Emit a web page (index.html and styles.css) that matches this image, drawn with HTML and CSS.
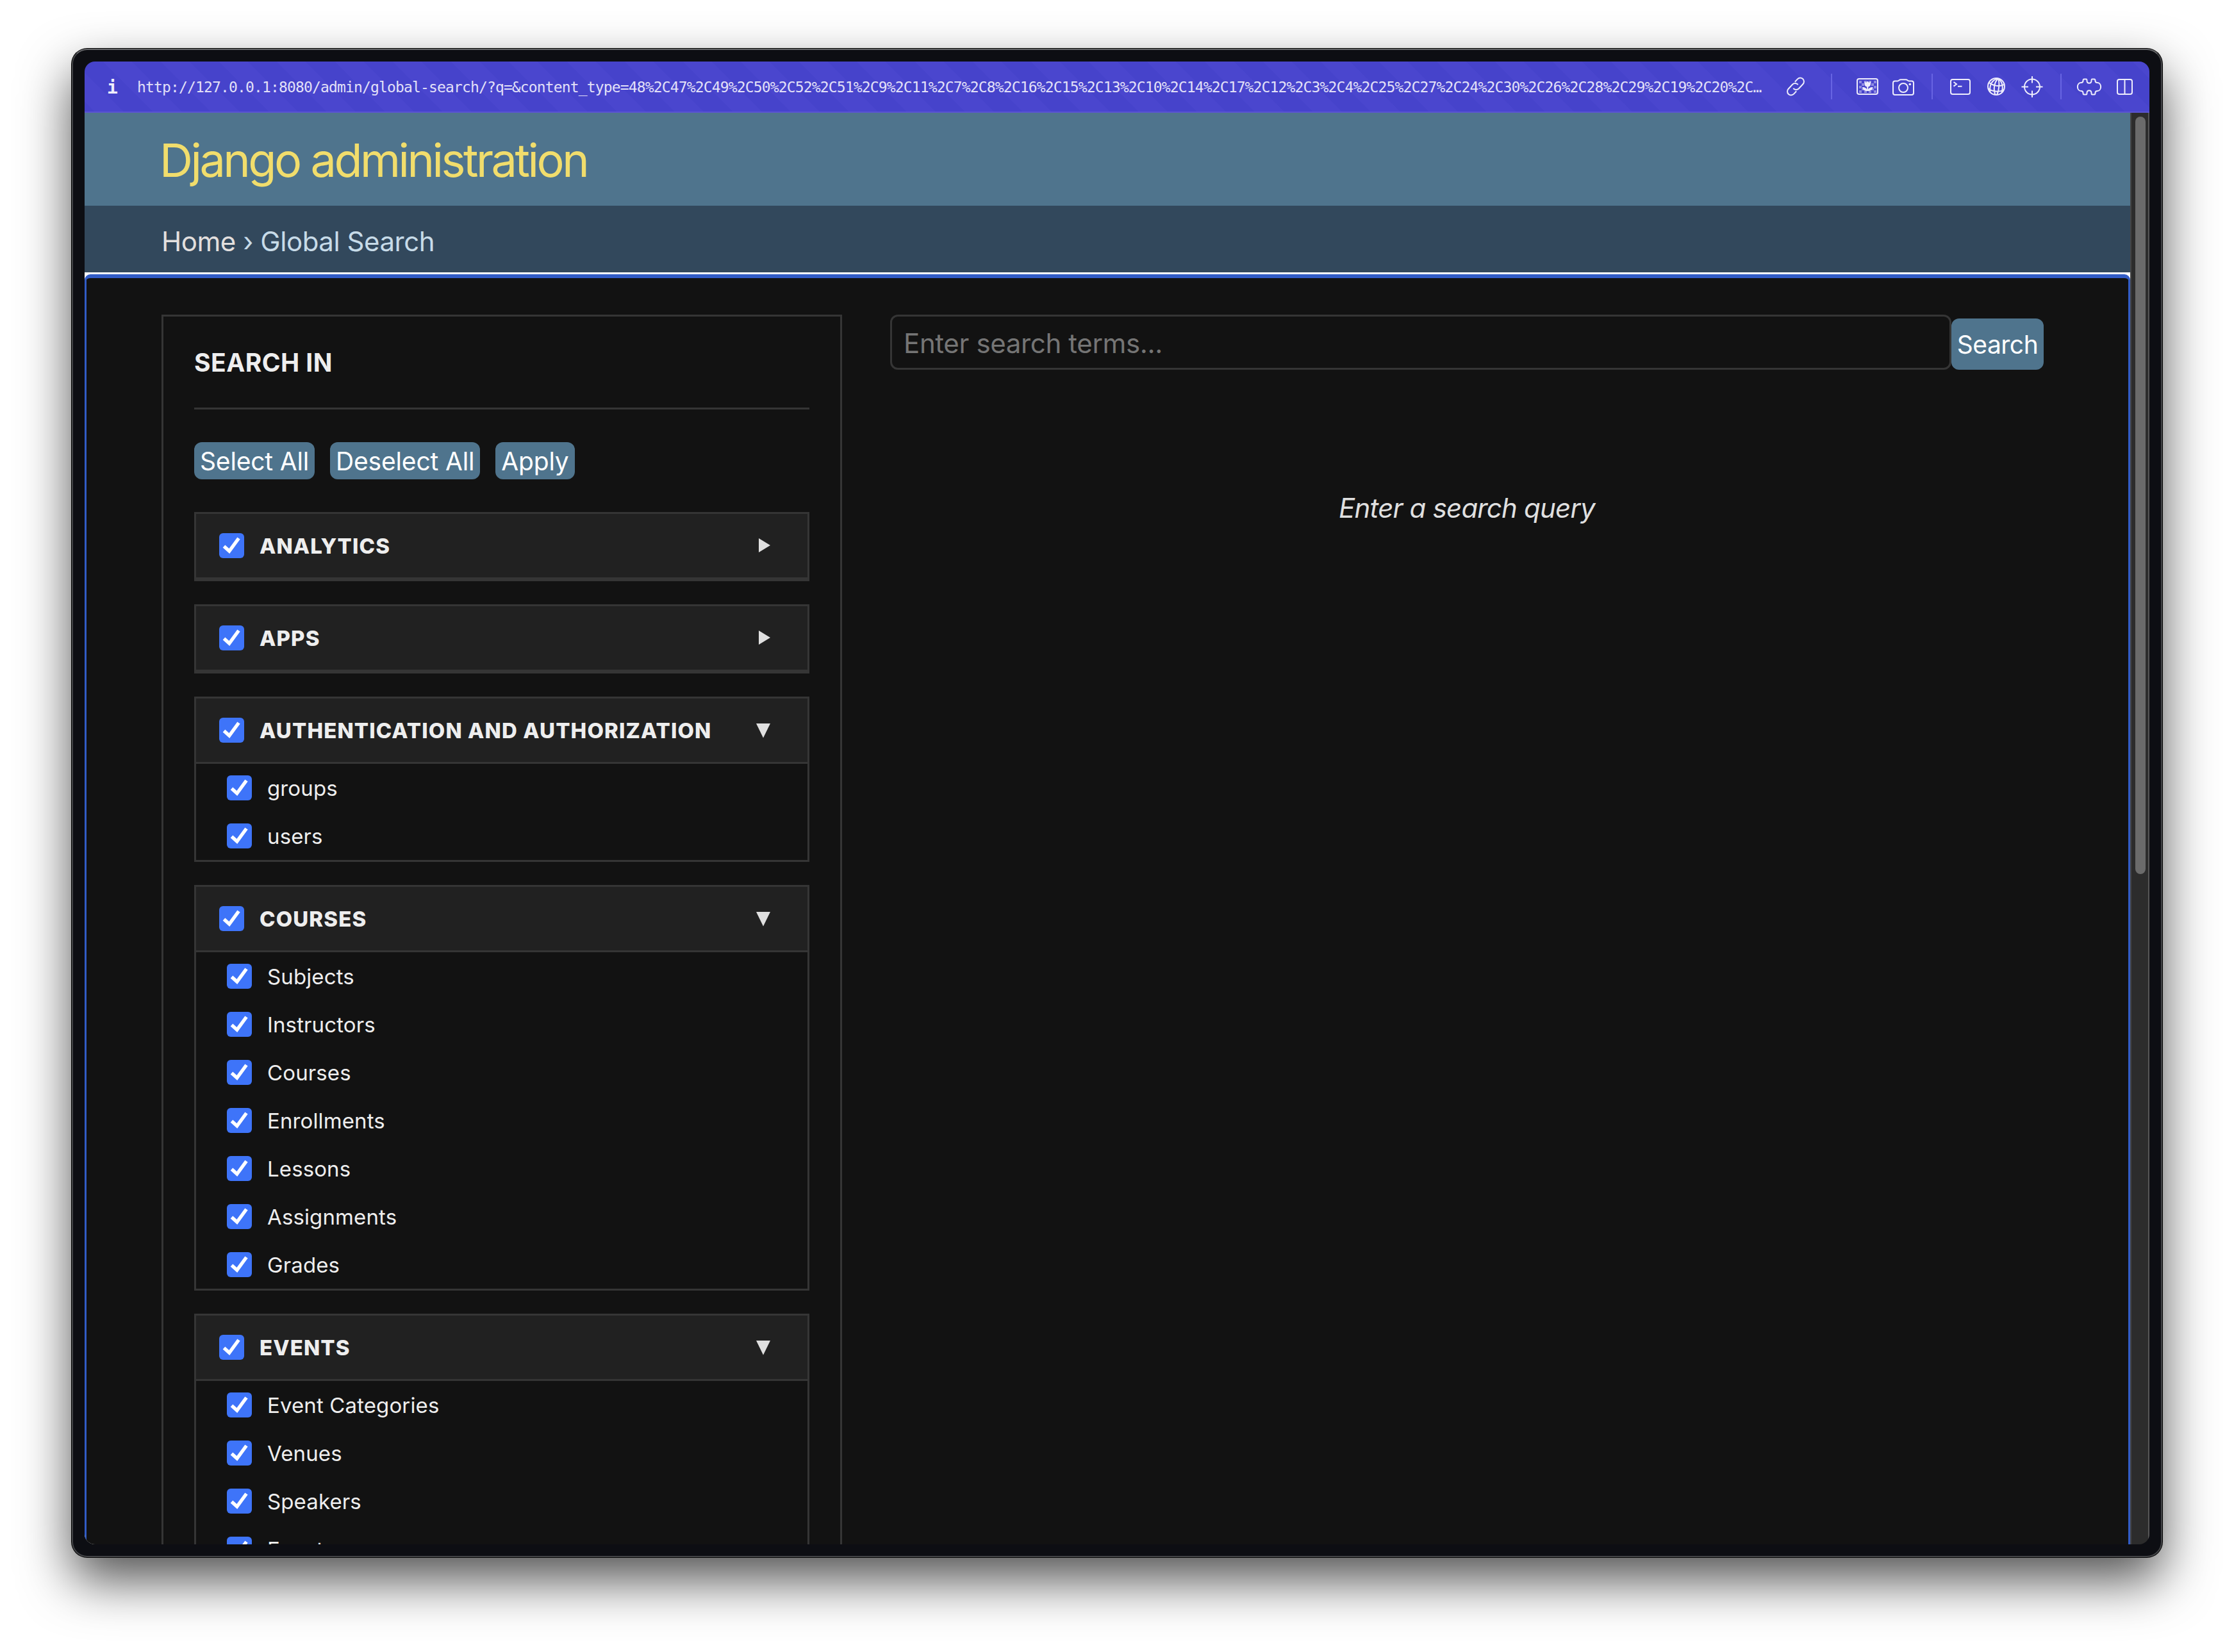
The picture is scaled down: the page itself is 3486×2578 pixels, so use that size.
FILE: index.html
```
<!DOCTYPE html>
<html lang="en">
<head>
    <meta charset="UTF-8">
    <meta name="viewport" content="width=device-width, initial-scale=1.0">
    <title>Global Search | Django site admin</title>
    <link rel="stylesheet" href="styles.css">
</head>
<body>
    <!-- shared shapes -->
    <svg class="defs" aria-hidden="true">
        <symbol id="check" viewBox="0 0 39 39">
            <path d="M7.5 20.5 L15.8 28 L30.5 8" fill="none" stroke="#fff" stroke-width="5.4"/>
        </symbol>
        <symbol id="closed" viewBox="0 0 24 24">
            <path d="M4 0 L22 11 L4 22 Z" fill="#e0e0e0"/>
        </symbol>
        <symbol id="open" viewBox="0 0 24 24">
            <path d="M0 1 H22 L11 23.5 Z" fill="#e0e0e0"/>
        </symbol>
    </svg>

    <div class="window">
        <div class="viewport">
            <div class="toolbar">
                <span class="info">i</span>
                <span class="url">http://127.0.0.1:8080/admin/global-search/?q=&amp;content_type=48%2C47%2C49%2C50%2C52%2C51%2C9%2C11%2C7%2C8%2C16%2C15%2C13%2C10%2C14%2C17%2C12%2C3%2C4%2C25%2C27%2C24%2C30%2C26%2C28%2C29%2C19%2C20%2C…</span>
                <div class="tool-group tool-link">
                    <svg viewBox="0 0 56 40">
                        <g transform="rotate(-47 28 20)">
                            <path d="M23.5 25.8 H17.5 A5.8 5.8 0 0 1 17.5 14.2 H27 A5.8 5.8 0 0 1 32.6 20.8"/>
                            <path d="M32.5 14.2 H38.5 A5.8 5.8 0 0 1 38.5 25.8 H29 A5.8 5.8 0 0 1 23.4 19.2"/>
                        </g>
                    </svg>
                </div>
                <div class="tool-group tool-capture">
                    <svg viewBox="0 0 56 40">
                        <g class="checker">
                            <rect x="15" y="11" width="4" height="4"/><rect x="23" y="11" width="4" height="4"/><rect x="30" y="11" width="4" height="4"/><rect x="38" y="11" width="4" height="4"/>
                            <rect x="19" y="15" width="4" height="4"/><rect x="34" y="15" width="4" height="4"/>
                            <rect x="15" y="19" width="4" height="4"/><rect x="38" y="19" width="4" height="4"/>
                            <rect x="19" y="23" width="4" height="3"/><rect x="34" y="23" width="4" height="3"/>
                            <rect x="15" y="26" width="4" height="4"/><rect x="23" y="27" width="4" height="3"/><rect x="30" y="27" width="4" height="3"/><rect x="38" y="26" width="4" height="4"/>
                        </g>
                        <rect x="12" y="8" width="32" height="24" rx="3"/>
                        <path class="solid" d="M23.5 12 L26 14 L28.2 11.5 L30.5 14 L33 12 V16 C33 18.5 31.5 20 29.3 20.4 V24.5 C30.5 22 33.5 20.5 36.5 21 C36 25 33 27 29.3 27 H27.2 C23.5 27 20.5 25 20 21 C23 20.5 26 22 27.2 24.5 V20.4 C25 20 23.5 18.5 23.5 16 Z"/>
                    </svg>
                    <svg viewBox="0 0 56 40">
                        <path d="M15 11.5 H19 C21.5 11.5 21.5 9.2 24 9.2 H32 C34.5 9.2 34.5 11.5 37 11.5 H41 Q44 11.5 44 14.5 V30 Q44 33 41 33 H15 Q12 33 12 30 V14.5 Q12 11.5 15 11.5 Z"/>
                        <circle cx="28" cy="22" r="7"/>
                        <circle class="solid" cx="38.3" cy="16.5" r="1.8"/>
                    </svg>
                </div>
                <div class="tool-group tool-inspect">
                    <svg viewBox="0 0 56 40">
                        <rect x="13" y="9" width="30" height="23" rx="3"/>
                        <path d="M17.5 13 L22 16.3 L17.5 19.6 M24 19.8 H30.5"/>
                    </svg>
                    <svg viewBox="0 0 56 40">
                        <circle cx="28" cy="20" r="13"/>
                        <path d="M31 7.5 C25 13 23 24 26.5 33 M31 7.5 C33.5 14 32.5 26 29 33 M31 7.5 C22 9 17 17 18.5 28 M31 7.5 C37 12 39.5 20 36.5 29 M17 14 C24 19.5 33 20.5 40.5 17 M15.5 23 C22 28.5 33 29 40 25"/>
                    </svg>
                    <svg viewBox="0 0 56 40">
                        <circle cx="28" cy="20.5" r="12"/>
                        <path d="M28 4 V14.5 M28 26.5 V37 M11.5 20.5 H22 M34 20.5 H44.5"/>
                    </svg>
                </div>
                <div class="tool-group tool-panels">
                    <svg viewBox="0 0 56 40">
                        <path d="M20 8.5 H23.5 C24.5 8.5 24.5 9.5 24.5 11 C24.5 16 31.5 16 31.5 11 C31.5 9.5 31.5 8.5 32.5 8.5 H36 Q37.5 8.5 37.5 11 C37.5 13.5 38.5 14 40.5 14 C48 14 48 27 40.5 27 C38.5 27 37.5 27.5 37.5 30 Q37.5 32.5 36 32.5 H32.5 C31.5 32.5 31.5 31.5 31.5 30 C31.5 25 24.5 25 24.5 30 C24.5 31.5 24.5 32.5 23.5 32.5 H20 Q18.5 32.5 18.5 30 C18.5 27.5 17.5 27 15.5 27 C8 27 8 14 15.5 14 C17.5 14 18.5 13.5 18.5 11 Q18.5 8.5 20 8.5 Z"/>
                    </svg>
                    <svg viewBox="0 0 56 40">
                        <rect x="16" y="9" width="23" height="23" rx="3"/>
                        <path d="M27.5 9 V32"/>
                    </svg>
                </div>
            </div>

            <div class="page-row">
                <div class="page">
                    <header class="branding">
                        <h1>Django administration</h1>
                    </header>
                    <nav class="breadcrumbs"><a>Home</a> › Global Search</nav>

                    <main class="main">
                        <div class="content">
                            <aside class="sidebar">
                                <h2>Search in</h2>
                                <div class="actions">
                                    <button type="button">Select All</button>
                                    <button type="button">Deselect All</button>
                                    <button type="button">Apply</button>
                                </div>

                                <section class="app">
                                    <div class="app-head">
                                        <svg class="box"><use href="#check"/></svg>
                                        <span>Analytics</span>
                                        <svg class="arrow"><use href="#closed"/></svg>
                                    </div>
                                </section>

                                <section class="app">
                                    <div class="app-head">
                                        <svg class="box"><use href="#check"/></svg>
                                        <span>Apps</span>
                                        <svg class="arrow"><use href="#closed"/></svg>
                                    </div>
                                </section>

                                <section class="app">
                                    <div class="app-head">
                                        <svg class="box"><use href="#check"/></svg>
                                        <span>Authentication and Authorization</span>
                                        <svg class="arrow"><use href="#open"/></svg>
                                    </div>
                                    <label class="model"><svg class="box"><use href="#check"/></svg>groups</label>
                                    <label class="model"><svg class="box"><use href="#check"/></svg>users</label>
                                </section>

                                <section class="app">
                                    <div class="app-head">
                                        <svg class="box"><use href="#check"/></svg>
                                        <span>Courses</span>
                                        <svg class="arrow"><use href="#open"/></svg>
                                    </div>
                                    <label class="model"><svg class="box"><use href="#check"/></svg>Subjects</label>
                                    <label class="model"><svg class="box"><use href="#check"/></svg>Instructors</label>
                                    <label class="model"><svg class="box"><use href="#check"/></svg>Courses</label>
                                    <label class="model"><svg class="box"><use href="#check"/></svg>Enrollments</label>
                                    <label class="model"><svg class="box"><use href="#check"/></svg>Lessons</label>
                                    <label class="model"><svg class="box"><use href="#check"/></svg>Assignments</label>
                                    <label class="model"><svg class="box"><use href="#check"/></svg>Grades</label>
                                </section>

                                <section class="app">
                                    <div class="app-head">
                                        <svg class="box"><use href="#check"/></svg>
                                        <span>Events</span>
                                        <svg class="arrow"><use href="#open"/></svg>
                                    </div>
                                    <label class="model"><svg class="box"><use href="#check"/></svg>Event Categories</label>
                                    <label class="model"><svg class="box"><use href="#check"/></svg>Venues</label>
                                    <label class="model"><svg class="box"><use href="#check"/></svg>Speakers</label>
                                    <label class="model"><svg class="box"><use href="#check"/></svg>Events</label>
                                </section>
                            </aside>

                            <div class="results">
                                <form class="search-form">
                                    <input type="text" name="q" placeholder="Enter search terms...">
                                    <button type="button">Search</button>
                                </form>
                                <p class="empty">Enter a search query</p>
                            </div>
                        </div>
                    </main>
                </div>
                <div class="scrollbar"><div class="thumb"></div></div>
            </div>
        </div>
    </div>
</body>
</html>
```

FILE: styles.css
```
* {
    box-sizing: border-box;
}
body {
    margin: 0;
    height: 2578px;
    padding: 76px 112px 148px;
    overflow: hidden;
    background-color: white;
    font-family: Inter, sans-serif;
    color: #eee;
}
.defs {
    display: none;
}
.window {
    height: 2354px;
    padding: 18px;
    border: 2px solid #434447;
    border-top-color: #66676a;
    border-radius: 24px;
    background-color: #0d0e13;
    box-shadow: 0 0 0 1px #000, 0 36px 80px rgba(0,0,0,0.68);
}
.viewport {
    display: flex;
    flex-direction: column;
    height: 2314px;
    border-radius: 16px;
    overflow: hidden;
}

/* browser toolbar */
.toolbar {
    display: flex;
    flex: none;
    align-items: center;
    height: 80px;
    padding: 0 10px 0 35px;
    border-bottom: 2px solid #5a54d2;
    background: repeating-linear-gradient(45deg, #4643cb 0 11px, #4a46ce 11px 43px, #4643cb 43px 64px);
}
.info {
    width: 47px;
    padding-top: 3px;
    font: bold 28px/75px "DejaVu Sans Mono", monospace;
    color: #f0effc;
}
.url {
    flex: 1;
    padding-top: 3px;
    font: 23px/75px "DejaVu Sans Mono", monospace;
    letter-spacing: -0.85px;
    white-space: nowrap;
    color: #e2e0f8;
}
.tool-group {
    display: flex;
    flex: none;
    align-items: center;
    height: 40px;
}
.tool-group svg {
    width: 56px;
    height: 40px;
    fill: none;
    stroke: #eeedfc;
    stroke-width: 2;
}
.tool-group .solid {
    fill: #eeedfc;
    stroke: none;
}
.tool-group .checker {
    fill: #8f8ce2;
    stroke: none;
}
.tool-link {
    padding-right: 27px;
}
.tool-capture,
.tool-inspect,
.tool-panels {
    border-left: 2px solid #6764e2;
}
.tool-capture {
    padding: 0 16px 0 27px;
}
.tool-inspect {
    padding: 0 16px 0 15px;
}
.tool-panels {
    padding-left: 15px;
}

/* page */
.page-row {
    display: flex;
    flex: 1;
    min-height: 0;
}
.page {
    display: flex;
    flex: 1;
    flex-direction: column;
    min-width: 0;
    background-color: white;
}
.branding {
    flex: none;
    height: 145px;
    padding: 3px 117px 0;
    background-color: #4f748d;
}
.branding h1 {
    margin: 0;
    font-size: 72px;
    font-weight: 400;
    line-height: 142px;
    letter-spacing: -3.5px;
    color: #f1dd6c;
}
.breadcrumbs {
    flex: none;
    height: 104px;
    padding: 4px 120px 0;
    background-color: #32485c;
    font-size: 42px;
    line-height: 104px;
    letter-spacing: -0.45px;
    color: #c7dbe8;
}
.breadcrumbs a {
    color: #e2dfde;
}
.main {
    flex: 1;
    min-height: 0;
    margin-top: 3px;
    border: 3px solid #315cc6;
    border-width: 6px 3px 0;
    border-radius: 9px 9px 0 0;
    background-color: #121212;
    overflow: hidden;
}
.content {
    display: flex;
    align-items: flex-start;
    gap: 75px;
    padding: 57px 132px 0 117px;
}
.sidebar {
    flex: none;
    width: 1062px;
    height: 2100px;
    padding: 0 48px;
    border: 3px solid #353535;
    overflow: hidden;
}
.sidebar h2 {
    margin: 0 0 51px;
    padding-top: 2px;
    height: 145px;
    border-bottom: 3px solid #353535;
    font-size: 39px;
    font-weight: 700;
    line-height: 140px;
    letter-spacing: 0.45px;
    text-transform: uppercase;
}
.actions {
    display: flex;
    gap: 24px;
    margin-bottom: 51px;
}
button {
    height: 58px;
    padding: 2px 9px 0;
    border: none;
    border-radius: 12px;
    background-color: #4f748d;
    font-family: inherit;
    font-size: 39px;
    line-height: 56px;
    letter-spacing: -0.17px;
    color: white;
}
.app {
    margin-bottom: 36px;
    border: 3px solid #353535;
}
.app-head {
    display: flex;
    align-items: center;
    gap: 24px;
    height: 102px;
    padding: 0 60px 0 36px;
    border-bottom: 3px solid #353535;
    background-color: #212121;
    font-size: 33px;
    font-weight: 800;
    letter-spacing: 1.1px;
    text-transform: uppercase;
}
.app-head span {
    flex: 1;
}
.box {
    flex: none;
    width: 39px;
    height: 39px;
    border-radius: 6px;
    background-color: #3e74f9;
}
.arrow {
    flex: none;
    width: 24px;
    height: 24px;
    margin-right: -4px;
}
.model {
    display: flex;
    align-items: center;
    gap: 24px;
    height: 75px;
    padding-left: 48px;
    font-size: 33px;
    letter-spacing: 0.12px;
}
.results {
    flex: 1;
}
.search-form {
    display: flex;
    align-items: flex-end;
}
.search-form input {
    flex: 1;
    min-width: 0;
    height: 86px;
    padding: 2px 18px 0;
    border: 3px solid #353535;
    border-radius: 12px;
    background-color: #121212;
    font-family: inherit;
    font-size: 42px;
    letter-spacing: -0.35px;
    color: #eee;
}
.search-form input::placeholder {
    color: #757575;
    opacity: 1;
}
.search-form button {
    width: 144px;
    height: 80px;
    padding: 1px 0 0;
    letter-spacing: -0.5px;
}
.empty {
    margin: 186px 0 0;
    font-size: 42px;
    font-style: italic;
    line-height: 60px;
    letter-spacing: -0.79px;
    text-align: center;
    color: #e0e0e0;
}

/* scrollbar */
.scrollbar {
    flex: none;
    width: 30px;
    padding: 6px 6px 0;
    border: 2px solid #444;
    border-width: 0 2px;
    border-right-color: #575757;
    background-color: #2c2c2c;
}
.thumb {
    width: 16px;
    height: 1182px;
    border-radius: 8px;
    background-color: #6b6b6b;
}
```
